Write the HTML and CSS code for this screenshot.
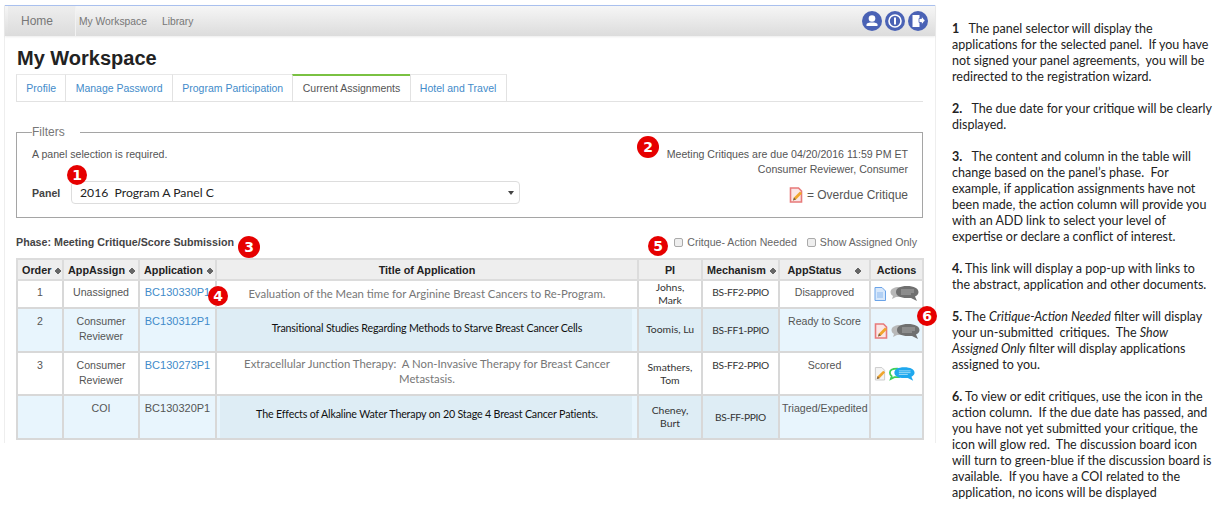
FILE: index.html
```html
<!DOCTYPE html>
<html lang="en">
<head>
    <meta charset="UTF-8">
    <title>My Workspace</title>
    <link rel="stylesheet" href="styles.css">
</head>
<body>
    <svg class="defs" width="0" height="0">
        <symbol id="doc" viewBox="0 0 12 14">
            <path d="M1 .5h7l3.500 3.500v9.500h-10.500z" fill="#d8e8fb" stroke="#6aa3e8"/>
            <path d="M3 6h6M3 8h6M3 10h6" stroke="#8db9ee"/>
        </symbol>
        <symbol id="pencil" viewBox="0 0 13 15">
            <path d="M1.500 .5h7l3 3v10.500h-10z" fill="#f4f4f4" stroke="#c9c9c9"/>
            <path d="M3 13l1-3 6-6 2 2-6 6z" fill="#f0a52c"/>
            <path d="M3 13l1-3 2 2z" fill="#77604a"/>
        </symbol>
        <symbol id="pencil-red" viewBox="0 0 14 16">
            <path d="M1.500 1h8l3 3v11h-11z" fill="#fbe6e6" stroke="#e77a7a" stroke-width="1.600"/>
            <path d="M4 13.500l1-3 6-6 2 2-6 6z" fill="#f0a52c"/>
            <path d="M4 13.500l1-3 2 2z" fill="#77604a"/>
        </symbol>
        <symbol id="chat-grey" viewBox="0 0 29 15">
            <path d="M10 1C4 1 .5 3 .5 6c0 2 1 3 2.500 4l-1 3 4-2h5z" fill="#b8b8b8"/>
            <path d="M17 0C10 0 6 2.500 6 6s4 6 11 6h4l6 3-2-4.500c2-1 3.500-2.500 3.500-4.500C28.500 2.500 24 0 17 0z" fill="#707070"/>
            <path d="M11 4h13M11 6h13M11 8h10" stroke="#a9a9a9"/>
        </symbol>
        <symbol id="chat-color" viewBox="0 0 29 15">
            <path d="M9 1.500C4 1.500 1 3 1 6c0 2 1 3 2 4l-1 3 4-2h5z" fill="#fff" stroke="#3fcf5a" stroke-width="2"/>
            <path d="M17 0C10 0 6 2.500 6 6s4 6 11 6h4l6 3-2-4.500c2-1 3.500-2.500 3.500-4.500C28.500 2.500 24 0 17 0z" fill="#1fa8ee"/>
            <path d="M11 4h13M11 6h13M11 8h10" stroke="#a5def8"/>
        </symbol>
    </svg>

    <div class="page">
        <div class="app">
            <nav class="navbar">
                <a class="nav-home">Home</a>
                <a class="nav-link">My Workspace</a>
                <a class="nav-link">Library</a>
                <div class="nav-icons">
                    <svg class="nav-icon" viewBox="0 0 20 20"><circle cx="10" cy="10" r="10" fill="#4a62b5"/><circle cx="10" cy="7.500" r="3.300" fill="#fff"/><path d="M4.500 15v-1.500c0-1.500 2.500-2 5.500-2s5.500.5 5.500 2V15z" fill="#fff"/></svg>
                    <svg class="nav-icon" viewBox="0 0 20 20"><circle cx="10" cy="10" r="10" fill="#4a62b5"/><circle cx="10" cy="10" r="6" fill="none" stroke="#fff" stroke-width="1.600"/><path d="M10 6.500v7" stroke="#fff" stroke-width="2"/></svg>
                    <svg class="nav-icon" viewBox="0 0 20 20"><circle cx="10" cy="10" r="10" fill="#4a62b5"/><path d="M4.500 4h7v12h-7z" fill="#fff"/><path d="M11 7.500h2.500V5l3.500 4.500-3.500 4.500v-2.500H11z" fill="#fff" stroke="#4a62b5" stroke-width=".8"/></svg>
                </div>
            </nav>

            <main class="content">
                <h1>My Workspace</h1>
                <ul class="tabs">
                    <li><a>Profile</a></li>
                    <li><a>Manage Password</a></li>
                    <li><a>Program Participation</a></li>
                    <li class="active"><a>Current Assignments</a></li>
                    <li><a>Hotel and Travel</a></li>
                </ul>

                <fieldset class="filters">
                    <legend>Filters</legend>
                    <div class="filters-left">
                        <p class="required">A panel selection is required.</p>
                        <div class="panel-row">
                            <label>Panel</label>
                            <div class="panel-select">2016  Program A Panel C<span class="caret"></span></div>
                        </div>
                    </div>
                    <div class="filters-right">
                        <p>Meeting Critiques are due 04/20/2016 11:59 PM ET</p>
                        <p>Consumer Reviewer, Consumer</p>
                        <p class="overdue"><svg class="icon-legend"><use href="#pencil-red"/></svg>= Overdue Critique</p>
                    </div>
                </fieldset>

                <div class="phase-row">
                    <strong>Phase: Meeting Critique/Score Submission</strong>
                    <div class="checks">
                        <label><input type="checkbox">Critque- Action Needed</label>
                        <label><input type="checkbox">Show Assigned Only</label>
                    </div>
                </div>

                <table class="grid">
                    <thead>
                        <tr>
                            <th class="col-order">Order <i class="sort"></i></th>
                            <th class="col-assign">AppAssign <i class="sort"></i></th>
                            <th class="col-app">Application <i class="sort"></i></th>
                            <th class="col-title">Title of Application</th>
                            <th class="col-pi">PI</th>
                            <th class="col-mech">Mechanism <i class="sort"></i></th>
                            <th class="col-status">AppStatus <i class="sort sort-far"></i></th>
                            <th class="col-actions">Actions</th>
                        </tr>
                    </thead>
                    <tbody>
                        <tr class="row-short">
                            <td>1</td>
                            <td>Unassigned</td>
                            <td><a>BC130330P1</a></td>
                            <td class="title title-grey title-one">Evaluation of the Mean time for Arginine Breast Cancers to Re-Program.</td>
                            <td class="pi pi-tight">Johns,<br>Mark</td>
                            <td class="mech">BS-FF2-PPIO</td>
                            <td>Disapproved</td>
                            <td class="actions"><svg class="icon-doc"><use href="#doc"/></svg><svg class="icon-chat"><use href="#chat-grey"/></svg></td>
                        </tr>
                        <tr class="row-tall tinted">
                            <td>2</td>
                            <td>Consumer<br>Reviewer</td>
                            <td><a>BC130312P1</a></td>
                            <td class="title title-dark pasted pasted-title">Transitional Studies Regarding Methods to Starve Breast Cancer Cells</td>
                            <td class="pi pi-mid pasted">Toomis, Lu</td>
                            <td class="mech mech-mid pasted">BS-FF1-PPIO</td>
                            <td>Ready to Score</td>
                            <td class="actions"><svg class="icon-overdue"><use href="#pencil-red"/></svg><svg class="icon-chat"><use href="#chat-grey"/></svg></td>
                        </tr>
                        <tr class="row-tall row-third">
                            <td>3</td>
                            <td>Consumer<br>Reviewer</td>
                            <td><a>BC130273P1</a></td>
                            <td class="title title-grey title-two">Extracellular Junction Therapy:&nbsp; A Non-Invasive Therapy for Breast Cancer<br>Metastasis.</td>
                            <td class="pi">Smathers,<br>Tom</td>
                            <td class="mech">BS-FF2-PPIO</td>
                            <td>Scored</td>
                            <td class="actions"><svg class="icon-edit"><use href="#pencil"/></svg><svg class="icon-chat-on"><use href="#chat-color"/></svg></td>
                        </tr>
                        <tr class="row-tall tinted">
                            <td></td>
                            <td>COI</td>
                            <td class="plain-id">BC130320P1</td>
                            <td class="title title-dark title-last pasted pasted-last">The Effects of Alkaline Water Therapy on 20 Stage 4 Breast Cancer Patients.</td>
                            <td class="pi pasted">Cheney,<br>Burt</td>
                            <td class="mech mech-mid pasted">BS-FF-PPIO</td>
                            <td>Triaged/Expedited</td>
                            <td></td>
                        </tr>
                    </tbody>
                </table>
            </main>

            <span class="badge badge-1">1</span>
            <span class="badge badge-2">2</span>
            <span class="badge badge-3">3</span>
            <span class="badge badge-4">4</span>
            <span class="badge badge-5">5</span>
            <span class="badge badge-6">6</span>
        </div>

        <aside class="notes">
            <p><b>1</b>&nbsp;&nbsp; The panel selector will display the<br>applications for the selected panel.&nbsp; If you have<br>not signed your panel agreements,&nbsp; you will be<br>redirected to the registration wizard.</p>
            <p><b>2.</b>&nbsp;&nbsp; The due date for your critique will be clearly<br>displayed.</p>
            <p><b>3.</b>&nbsp;&nbsp; The content and column in the table will<br>change based on the panel’s phase.&nbsp; For<br>example, if application assignments have not<br>been made, the action column will provide you<br>with an ADD link to select your level of<br>expertise or declare a conflict of interest.</p>
            <p><b>4.</b> This link will display a pop-up with links to<br>the abstract, application and other documents.</p>
            <p><b>5.</b> The <em>Critique-Action Needed</em> filter will display<br>your un-submitted&nbsp; critiques.&nbsp; The <em>Show</em><br><em>Assigned Only</em> filter will display applications<br>assigned to you.</p>
            <p><b>6.</b> To view or edit critiques, use the icon in the<br>action column.&nbsp; If the due date has passed, and<br>you have not yet submitted your critique, the<br>icon will glow red.&nbsp; The discussion board icon<br>will turn to green-blue if the discussion board is<br>available.&nbsp; If you have a COI related to the<br>application, no icons will be displayed</p>
        </aside>
    </div>
</body>
</html>
```

FILE: styles.css
```css
* {
    box-sizing: border-box;
}
body {
    margin: 0;
    background-color: #fff;
    font-family: "Liberation Sans", Arial, sans-serif;
    font-size: 10.6px;
    color: #555;
}
p {
    margin: 0;
}
.defs {
    display: block;
    height: 0;
}
.page {
    display: flex;
    align-items: flex-start;
}

/* screenshot of the app */
.app {
    position: relative;
    width: 932px;
    height: 438px;
    margin: 5px 0 0 4px;
    border-left: 1px solid #eee;
    border-right: 1px solid #eee;
}
.navbar {
    display: flex;
    align-items: center;
    height: 31px;
    padding-left: 3px;
    border-top: 1px solid #a9c0ee;
    background: linear-gradient(#f6f6f6, #dcdcdc);
    box-shadow: 0 1px 2px rgba(0, 0, 0, 0.08);
}
.nav-home {
    width: 68px;
    height: 30px;
    padding-left: 13px;
    line-height: 30px;
    font-size: 12px;
    color: #777;
    background: linear-gradient(#eee, #dcdcdc);
    border-right: 1px solid #f2f2f2;
}
.nav-link {
    margin-right: 15px;
    font-size: 10.3px;
    color: #777;
}
.nav-home + .nav-link {
    margin-left: 3px;
}
.nav-icons {
    display: flex;
    gap: 3px;
    margin-left: auto;
    margin-right: 7px;
}
.nav-icon {
    width: 20px;
    height: 20px;
}

.content {
    padding: 0 12px 0 11px;
}
h1 {
    margin: 11px 0 0 1px;
    height: 27px;
    font-size: 20px;
    line-height: 22px;
    color: #222;
}
.tabs {
    display: flex;
    height: 28px;
    margin: 0;
    padding: 0;
    list-style: none;
    border-bottom: 1px solid #e2e2e2;
    font-size: 10.5px;
}
.tabs li {
    padding: 0 9.300px;
    line-height: 27px;
    border-top: 1px solid #e8e8e8;
    border-left: 1px solid #e2e2e2;
    color: #428bca;
}
.tabs li:last-child {
    border-right: 1px solid #e2e2e2;
}
.tabs .active {
    border-top: 2px solid #7ac142;
    line-height: 25px;
    color: #555;
}

.filters {
    display: block;
    position: relative;
    height: 93px;
    margin: 23px 0 0;
    padding: 8px 15px 0;
    border: 1px solid #a5a5a5;
    min-width: 0;
}
legend {
    padding: 0 15px 0 0;
    font-size: 12px;
    line-height: 14px;
    color: #777;
}
.required {
    line-height: 14px;
    color: #555;
}
.panel-row {
    display: flex;
    align-items: center;
    margin-top: 20px;
}
.panel-row label {
    width: 39px;
    font-weight: bold;
    color: #444;
}
.panel-select {
    position: relative;
    width: 449px;
    height: 23px;
    padding-left: 8px;
    border: 1px solid #ddd;
    border-radius: 4px;
    background-color: #fff;
    font-family: Lato, sans-serif;
    font-size: 12.200px;
    line-height: 22px;
    color: #222;
    white-space: pre;
}
.caret {
    position: absolute;
    top: 9px;
    right: 5px;
    border-left: 3px solid transparent;
    border-right: 3px solid transparent;
    border-top: 4px solid #444;
}
.filters-right {
    position: absolute;
    top: 8px;
    right: 14px;
    text-align: right;
    line-height: 15px;
}
.overdue {
    margin-top: 10px;
    font-size: 12px;
    line-height: 16px;
}
.icon-legend {
    width: 14px;
    height: 16px;
    margin-right: 4px;
    vertical-align: -4px;
}

.phase-row {
    display: flex;
    justify-content: space-between;
    align-items: center;
    height: 14px;
    margin-top: 17px;
    font-size: 10.7px;
    color: #444;
}
.checks {
    display: flex;
    gap: 10px;
    margin-right: 6px;
    color: #666;
}
.checks label {
    display: flex;
    align-items: center;
    font-size: 10.6px;
}
.checks input {
    appearance: none;
    width: 9px;
    height: 9px;
    margin: 0 4px 0 0;
    border: 1px solid #aaa;
    border-radius: 2px;
    background-color: #eee;
}

.grid {
    width: 906px;
    margin-top: 9px;
    border-collapse: collapse;
    table-layout: fixed;
    text-align: center;
}
.grid th {
    height: 21px;
    padding: 0 4px;
    background-color: #eee;
    border: 2px solid #dcdcdc;
    font-size: 10.8px;
    color: #222;
    white-space: nowrap;
}
.grid td {
    padding: 4px 2px 0;
    vertical-align: top;
    line-height: 15px;
    border: 2px solid #d8d8d8;
}
.grid a,
.plain-id {
    font-size: 11px;
}
.grid a {
    color: #428bca;
}
.col-order { width: 46px; }
.col-assign { width: 76px; }
.col-app { width: 77px; }
.col-title { width: 422px; }
.col-pi { width: 64px; }
.col-mech { width: 77px; }
.col-status { width: 91px; }
.col-actions { width: 53px; }

.sort {
    display: inline-block;
    width: 6px;
    height: 8px;
    margin-left: 1px;
    vertical-align: -1px;
    background: linear-gradient(to bottom right, transparent 50%, #666 50%) 0 0 / 3px 4px no-repeat,
        linear-gradient(to bottom left, transparent 50%, #666 50%) 3px 0 / 3px 4px no-repeat,
        linear-gradient(to top right, transparent 50%, #666 50%) 0 4px / 3px 4px no-repeat,
        linear-gradient(to top left, transparent 50%, #666 50%) 3px 4px / 3px 4px no-repeat;
}
.sort-far {
    margin-left: 11px;
}

.row-short td {
    height: 28px;
}
.row-tall td {
    height: 44px;
    padding-top: 5px;
}
.row-third td {
    height: 43px;
}
.tinted td {
    background-color: #e8f5fd;
}
.grid .pasted {
    background-color: #deedf5;
}
.grid .pasted-title {
    box-shadow: inset -5px 0 0 #e8f5fd;
}
.grid .pasted-last {
    box-shadow: inset 3px 0 0 #e8f5fd, inset -5px 0 0 #e8f5fd;
}
.plain-id {
    color: #555;
}
.title,
.pi,
.mech {
    font-family: Lato, sans-serif;
}
.title-grey {
    font-size: 11.350px;
    color: #777;
}
.title-dark {
    font-size: 10.700px;
    letter-spacing: -0.180px;
    color: #111;
}
.grid .title-one {
    padding-top: 5px;
}
.grid .title-two {
    padding-top: 3px;
}
.grid .pasted-title {
    padding-top: 11px;
}
.grid .title-last {
    padding-top: 10px;
}
.pi,
.mech {
    color: #333;
}
.pi {
    font-size: 10.400px;
    line-height: 13px;
}
.mech {
    font-size: 10.200px;
    letter-spacing: -0.350px;
}
.grid .pi {
    line-height: 13px;
    padding-top: 8px;
}
.grid .pi-tight {
    padding-top: 0;
}
.grid .pi-mid,
.grid .mech-mid {
    padding-top: 14px;
}
.grid .actions {
    padding: 5px 0 0 3px;
    text-align: left;
    line-height: 0;
    white-space: nowrap;
}
.row-tall .actions {
    padding-top: 14px;
}
.row-tall .actions svg {
    vertical-align: middle;
}
.icon-doc {
    width: 12px;
    height: 14px;
    margin-right: 4px;
    vertical-align: middle;
}
.icon-overdue {
    width: 14px;
    height: 16px;
    margin-right: 3px;
}
.icon-edit {
    width: 12px;
    height: 14px;
    margin-right: 3px;
}
.icon-chat {
    width: 29px;
    height: 15px;
    vertical-align: middle;
}
.icon-chat-on {
    width: 26px;
    height: 14px;
}

/* red callouts over the screenshot */
.badge {
    position: absolute;
    width: 20px;
    height: 20px;
    border-radius: 50%;
    background-color: #e60000;
    color: #fff;
    font-family: "DejaVu Sans", sans-serif;
    font-size: 14px;
    font-weight: bold;
    line-height: 20px;
    text-align: center;
}
.badge-1 { left: 62px; top: 160px; }
.badge-2 { left: 632px; top: 131px; width: 22px; height: 22px; line-height: 22px; }
.badge-3 { left: 233px; top: 231px; width: 22px; height: 22px; line-height: 22px; }
.badge-4 { left: 203px; top: 281px; }
.badge-5 { left: 643px; top: 231px; }
.badge-6 { left: 912px; top: 301px; }

.notes {
    margin: 21px 0 0 16px;
    font-family: Lato, sans-serif;
    font-size: 12.500px;
    line-height: 16px;
    color: #222;
    white-space: nowrap;
}
.notes p {
    margin-bottom: 16px;
}
```
